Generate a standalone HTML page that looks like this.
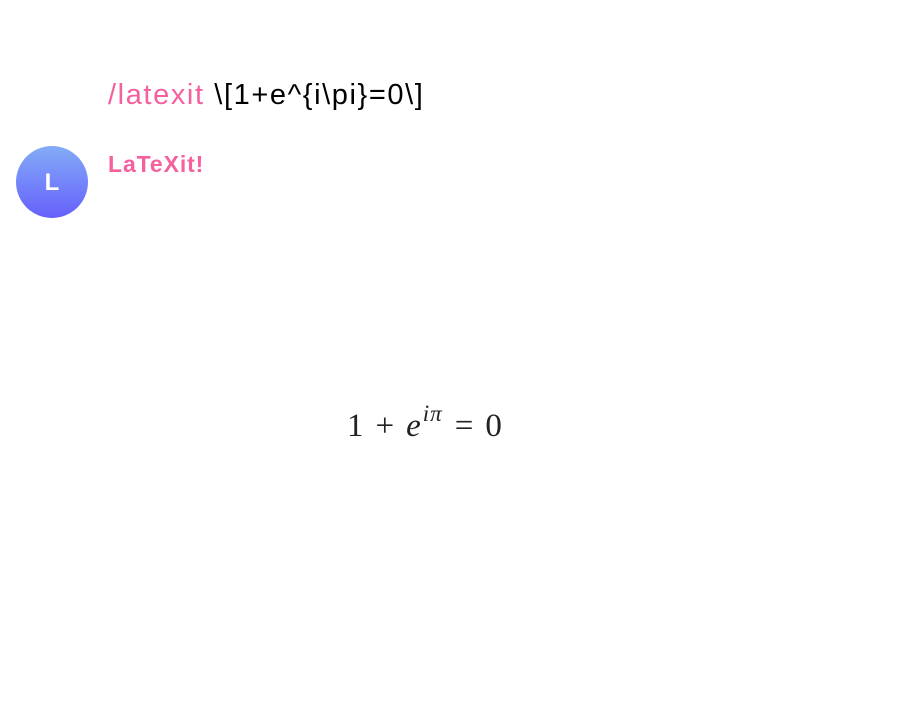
<!DOCTYPE html>
<html><head><meta charset="utf-8"><style>
body{margin:0;width:914px;height:706px;background:#fff;position:relative;overflow:hidden;font-family:"Liberation Sans",sans-serif}
.cmd{position:absolute;left:108px;top:79px;font-size:29px;color:#000;white-space:nowrap;letter-spacing:1.6px}
.cmd span{color:#f5609f}
.av{position:absolute;left:16px;top:146px;width:72px;height:72px;border-radius:50%;background:linear-gradient(#83acf8,#6660fb);color:#fff;font-weight:bold;font-size:24px;text-align:center;line-height:74px}
.name{position:absolute;left:108px;top:151px;font-size:23px;font-weight:bold;color:#f5609f;letter-spacing:0.9px}
.math{position:absolute;left:347px;top:408px;font-family:"Liberation Serif",serif;font-size:33px;color:#222;white-space:nowrap}
.math i{font-style:italic}
.math .op{margin:0 12px}
.math sup{font-size:23px;vertical-align:15px;line-height:0;margin-left:2px;letter-spacing:1px}
</style></head><body>
<div class="cmd"><span>/latexit</span> \[1+e^{i\pi}=0\]</div>
<div class="av">L</div>
<div class="name">LaTeXit!</div>
<div class="math">1<span class="op">+</span><i>e</i><sup><i>iπ</i></sup><span class="op">=</span>0</div>
</body></html>
